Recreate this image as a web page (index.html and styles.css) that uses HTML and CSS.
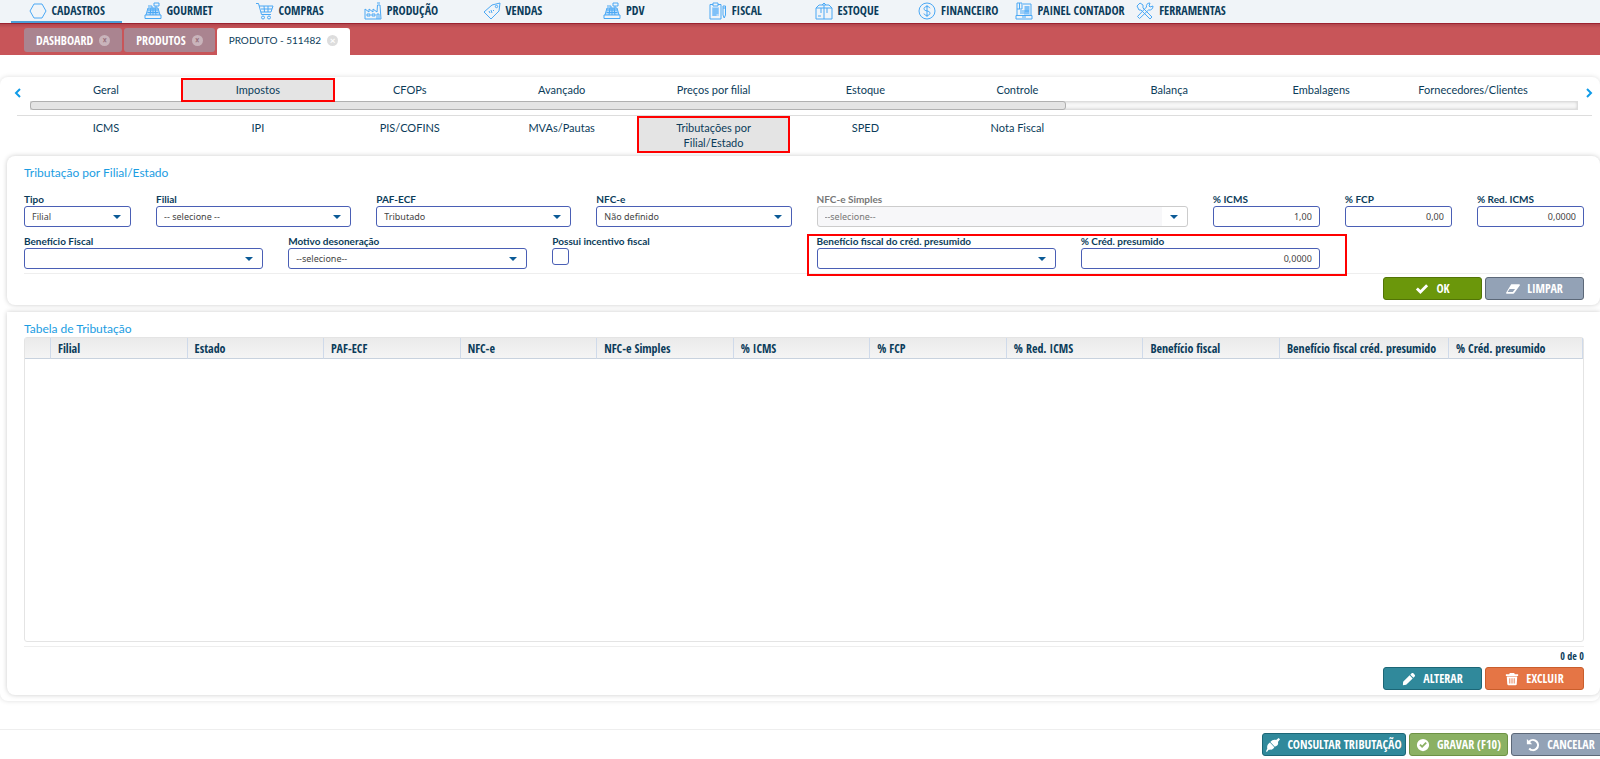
FILE: index.html
```html
<!DOCTYPE html>
<html lang="pt-BR">
<head>
  <meta charset="UTF-8">
  <meta name="viewport" content="width=device-width, initial-scale=1.0">
  <title>Produto - 511482</title>
  <link rel="stylesheet" href="styles.css">
</head>
<body>
  <nav class="topnav">
    <a href="#" class="active"><svg class="icon" viewBox="0 0 18 18"><path d="M5 2h8l4 7-4 7H5L1 9z"/></svg>CADASTROS</a>
    <a href="#"><svg class="icon" viewBox="0 0 18 18"><path class="tint" d="M4 6h10l2 7H2z"/><path d="M1 13h16v3.500H1zM2 13l2-7h10l2 7M10 1h5v3h-5zM12 4v2M4 8h10M3.500 10.500h11M7 6l-1 7M9 6v7M11 6l1 7M4 4h4v2"/></svg>GOURMET</a>
    <a href="#"><svg class="icon" viewBox="0 0 18 18"><path d="M0 1.500h2.500l3 11H15M3 4h14l-2 6H5M5 7h11M8 4l.5 6M12 4v6"/><circle cx="7" cy="15.500" r="1.500"/><circle cx="13" cy="15.500" r="1.500"/></svg>COMPRAS</a>
    <a href="#"><svg class="icon" viewBox="0 0 18 18"><path d="M1 17V7l4 3V7l4 3V7l4 3 .5-7H16l1 14zM13 1h3M3 12h3v2H3zM8 12h3v2H8zM13 17v-5h2v5"/></svg>PRODUÇÃO</a>
    <a href="#"><svg class="icon" viewBox="0 0 18 18"><path d="M1 10l8-7 8-2-1 8-8 8zM6 9l1 2M8 8l1 3M10 8l1 1"/><circle cx="13.500" cy="4.500" r="1.200"/></svg>VENDAS</a>
    <a href="#"><svg class="icon" viewBox="0 0 18 18"><path class="tint" d="M4 6h10l2 7H2z"/><path d="M1 13h16v3.500H1zM2 13l2-7h10l2 7M10 1h5v3h-5zM12 4v2M4 8h10M3.500 10.500h11M7 6l-1 7M9 6v7M11 6l1 7M4 4h4v2"/></svg>PDV</a>
    <a href="#"><svg class="icon" viewBox="0 0 18 18"><path class="tint" d="M3 5h7v9H3z"/><path d="M4 2.500H1V17h11V2.500H9M4 1h5v3H4zM3.500 7h6M3.500 9h6M3.500 11h6M3.500 13h4M14 4h2.500v9L15.200 16 14 13zM14 6h2.500"/></svg>FISCAL</a>
    <a href="#"><svg class="icon" viewBox="0 0 18 18"><path d="M1 6h16v11H1zM1 6l3-3h10l3 3M9 3v14M6 6v5M12 6v5M7 3l2-2 2 2M3 14h3"/></svg>ESTOQUE</a>
    <a href="#"><svg class="icon" viewBox="0 0 18 18"><circle cx="9" cy="9" r="8"/><path d="M12 6.200C11.500 5 10.400 4.600 9 4.600c-1.700 0-3 .8-3 2.100 0 3.100 6 1.400 6 4.500 0 1.400-1.300 2.200-3 2.200-1.500 0-2.700-.6-3.100-1.900M9 3v12"/></svg>FINANCEIRO</a>
    <a href="#"><svg class="icon" viewBox="0 0 18 18"><path class="tint" d="M9 4h6v9H9z"/><path d="M2 13V1h5v6H2M4.500 1v6M8 2h8v11M1 13.500h16V17H1zM10 5h4M10 7h4M10 9h4M5 9h9M5 11h9M7 15h4"/></svg>PAINEL CONTADOR</a>
    <a href="#"><svg class="icon" viewBox="0 0 18 18"><path d="M1 4l3-3 3 2v3l9 9-2 2-9-9H3zM17 4l-3 1-1-1 1-3c-3 0-4 2-3.500 4L1.500 14.500l2 2L12.500 8C15 8.500 17 7 17 4z"/></svg>FERRAMENTAS</a>
  </nav>

  <div class="doc-tabs">
    <a href="#" class="doc-tab">DASHBOARD <span class="close">×</span></a>
    <a href="#" class="doc-tab">PRODUTOS <span class="close">×</span></a>
    <a href="#" class="doc-tab current">PRODUTO - 511482 <span class="close">×</span></a>
  </div>

  <main class="page">
    <div class="tab-scroller">
      <button type="button" class="arrow" aria-label="Anterior"><svg viewBox="0 0 8 10"><path d="M6 1L2 5l4 4"/></svg></button>
      <div class="scroll-area">
        <nav class="tabs">
          <a href="#">Geral</a>
          <a href="#" class="selected">Impostos</a>
          <a href="#">CFOPs</a>
          <a href="#">Avançado</a>
          <a href="#">Preços por filial</a>
          <a href="#">Estoque</a>
          <a href="#">Controle</a>
          <a href="#">Balança</a>
          <a href="#">Embalagens</a>
          <a href="#">Fornecedores/Clientes</a>
        </nav>
        <div class="scrollbar"><div class="thumb"></div></div>
      </div>
      <button type="button" class="arrow" aria-label="Próximo"><svg viewBox="0 0 8 10"><path d="M2 1l4 4-4 4"/></svg></button>
    </div>

    <nav class="tabs subtabs">
      <a href="#">ICMS</a>
      <a href="#">IPI</a>
      <a href="#">PIS/COFINS</a>
      <a href="#">MVAs/Pautas</a>
      <a href="#" class="selected">Tributações por Filial/Estado</a>
      <a href="#">SPED</a>
      <a href="#">Nota Fiscal</a>
    </nav>

    <section class="panel">
      <h2>Tributação por Filial/Estado</h2>
      <form class="fields">
        <div class="field w3">
          <label for="tipo">Tipo</label>
          <select id="tipo"><option>Filial</option></select>
        </div>
        <div class="field w5">
          <label for="filial">Filial</label>
          <select id="filial"><option>-- selecione --</option></select>
        </div>
        <div class="field w5">
          <label for="paf">PAF-ECF</label>
          <select id="paf"><option>Tributado</option></select>
        </div>
        <div class="field w5">
          <label for="nfce">NFC-e</label>
          <select id="nfce"><option>Não definido</option></select>
        </div>
        <div class="field w9 disabled">
          <label for="nfce-simples">NFC-e Simples</label>
          <select id="nfce-simples" disabled><option>--selecione--</option></select>
        </div>
        <div class="field w3">
          <label for="icms">% ICMS</label>
          <input type="text" id="icms" value="1,00">
        </div>
        <div class="field w3">
          <label for="fcp">% FCP</label>
          <input type="text" id="fcp" value="0,00">
        </div>
        <div class="field w3">
          <label for="red-icms">% Red. ICMS</label>
          <input type="text" id="red-icms" value="0,0000">
        </div>

        <div class="field w6">
          <label for="beneficio">Benefício Fiscal</label>
          <select id="beneficio"><option></option></select>
        </div>
        <div class="field w6">
          <label for="motivo">Motivo desoneração</label>
          <select id="motivo"><option>--selecione--</option></select>
        </div>
        <div class="field w6">
          <label for="incentivo">Possui incentivo fiscal</label>
          <input type="checkbox" id="incentivo">
        </div>
        <div class="presumido">
          <div class="field">
            <label for="beneficio-cred">Benefício fiscal do créd. presumido</label>
            <select id="beneficio-cred"><option></option></select>
          </div>
          <div class="field">
            <label for="cred">% Créd. presumido</label>
            <input type="text" id="cred" value="0,0000">
          </div>
        </div>
      </form>
      <div class="actions">
        <button type="button" class="btn green"><svg viewBox="0 0 16 16"><path d="M1 8.500l2.300-2.300L6.200 9l6.500-6.500L15 4.800 6.200 13.600z"/></svg>OK</button>
        <button type="button" class="btn gray"><svg viewBox="0 0 18 16"><path fill-rule="evenodd" d="M7.500 2H17c.8 0 1.200.7.700 1.400l-7 9.800c-.3.500-.8.800-1.400.8H1c-.8 0-1.200-.8-.7-1.400l6-10c.3-.4.700-.6 1.200-.6zM4.600 8L2 12h6.800l2.800-4z"/></svg>LIMPAR</button>
      </div>
    </section>

    <section class="panel grow">
      <h2>Tabela de Tributação</h2>
      <div class="table-box">
        <table>
          <thead>
            <tr>
              <th class="mark"></th>
              <th>Filial</th>
              <th>Estado</th>
              <th>PAF-ECF</th>
              <th>NFC-e</th>
              <th>NFC-e Simples</th>
              <th>% ICMS</th>
              <th>% FCP</th>
              <th>% Red. ICMS</th>
              <th>Benefício fiscal</th>
              <th class="wide">Benefício fiscal créd. presumido</th>
              <th class="last">% Créd. presumido</th>
            </tr>
          </thead>
        </table>
      </div>
      <p class="count">0 de 0</p>
      <div class="actions">
        <button type="button" class="btn teal"><svg viewBox="0 0 16 16"><path d="M11 1.500c.6-.6 1.400-.6 2 0L14.500 3c.6.600.6 1.400 0 2L13 6.500 9.500 3zM8.700 3.800l3.500 3.500-7.400 7.400L1 15l.3-3.800z"/></svg>ALTERAR</button>
        <button type="button" class="btn orange"><svg viewBox="0 0 16 16"><path fill-rule="evenodd" d="M5.500 1h5l.7 1.500H15v2H1v-2h3.800zM2 5h12l-.6 9c0 .6-.6 1-1.200 1H3.800c-.6 0-1.200-.4-1.200-1zm3 2v6h1V7zm2.500 0v6h1V7zM10 7v6h1V7z"/></svg>EXCLUIR</button>
      </div>
    </section>
  </main>

  <footer class="bottom-bar">
    <button type="button" class="btn teal long"><svg viewBox="0 0 16 16"><path d="M0 15l1.500-3C.8 9 2 6.500 4.500 5l5 5.500c-1.500 2.500-4 3.500-6.500 2.800L1 16zM5 4.500C7 2.200 9 1.600 11.500 2.300L14.500 0 16 1.500l-2.300 3c.6 2.300 0 4.300-3.700 5.500z"/></svg>CONSULTAR TRIBUTAÇÃO</button>
    <button type="button" class="btn lime"><svg viewBox="0 0 16 16"><path fill-rule="evenodd" d="M8 1a7 7 0 110 14A7 7 0 018 1zM3.800 8.300L7 11.500l5.400-5.400-1.500-1.500L7 8.500 5.300 6.800z"/></svg>GRAVAR (F10)</button>
    <button type="button" class="btn gray"><svg viewBox="0 0 16 16"><path d="M1 1l2 2a7 7 0 11-.2 9.800l1.700-1.600A4.600 4.600 0 104.700 4.700L7 7H1z"/></svg>CANCELAR</button>
  </footer>
</body>
</html>
```
FILE: styles.css
```css
* {
  margin: 0;
  padding: 0;
  box-sizing: border-box;
}

body {
  display: flex;
  flex-direction: column;
  min-height: 100vh;
  overflow: hidden;
  background: #fff;
  color: #0b3c5a;
  font-family: Lato, sans-serif;
  font-size: 11px;
}

a {
  color: inherit;
  text-decoration: none;
}

/* Main menu */
.topnav {
  display: grid;
  grid-template-columns: repeat(11, 100fr) 326fr;
  height: 23px;
  padding-left: 11px;
  background: #f0f4f8;
  font-family: "Open Sans Condensed", Lato, sans-serif;
}

.topnav a {
  display: flex;
  align-items: center;
  justify-content: center;
  gap: 5px;
  font-size: 12px;
  white-space: nowrap;
  border-bottom: 2px solid transparent;
}

.topnav a.active {
  border-bottom-color: #4a9fd8;
}

.icon {
  flex: none;
  width: 18px;
  height: 18px;
  fill: none;
  stroke: #4aa8f5;
  stroke-width: 1;
}

.tint {
  fill: #b5dafb;
  stroke: none;
}

/* Open documents */
.doc-tabs {
  display: flex;
  gap: 2px;
  height: 32px;
  padding: 4px 24px 0;
  background: linear-gradient(#b0454c, #c85559 4px);
  border-top: 1px solid #9c2230;
}

.doc-tab {
  display: flex;
  align-items: center;
  gap: 6px;
  height: 24px;
  padding: 0 12px;
  border-radius: 3px;
  background: #aa8490;
  color: #fff;
  font-family: "Open Sans Condensed", Lato, sans-serif;
  font-size: 12px;
  font-weight: bold;
}

.doc-tab.current {
  height: 27px;
  padding: 0 12px 3px;
  border-radius: 3px 3px 0 0;
  background: #fff;
  color: #0b3c5a;
  font-family: Lato, sans-serif;
  font-size: 10px;
  font-weight: normal;
}

.close {
  width: 11px;
  height: 11px;
  border-radius: 50%;
  background: #c9b4bb;
  color: #98707c;
  font-size: 10px;
  font-weight: bold;
  line-height: 11px;
  text-align: center;
}

.current .close {
  background: #ddd;
  color: #fff;
}

/* Page card */
.page {
  flex: 1;
  display: flex;
  flex-direction: column;
  margin-top: 22px;
  padding-bottom: 6px;
  border-radius: 8px;
  box-shadow: 0 0 5px #ddd;
}

.tab-scroller {
  display: flex;
}

.scroll-area {
  flex: 1;
}

.arrow {
  width: 22px;
  border: none;
  background: none;
}

.arrow:first-child {
  width: 30px;
  padding-left: 6px;
}

.arrow svg {
  width: 8px;
  height: 10px;
  fill: none;
  stroke: #0f9be8;
  stroke-width: 2;
}

.tabs {
  display: grid;
  grid-template-columns: repeat(10, 1fr);
  padding: 2px 29px 0 0;
  line-height: 15px;
  text-align: center;
}

.tabs a {
  padding: 3px 10px 4px;
}

.tabs .selected {
  background: #e4e4e4;
  outline: 2px solid #f00;
  outline-offset: -1px;
  z-index: 1;
}

.scrollbar {
  height: 9px;
  border: 1px solid #ddd;
  background: #f7f7f7;
  box-shadow: inset 0 0 3px #ccc;
}

.thumb {
  width: 67%;
  height: 9px;
  margin: -1px;
  border: 1px solid #b0b0b0;
  border-radius: 3px;
  background: #e4e4e4;
}

.subtabs {
  margin: 5px 8px 0 17px;
  padding: 1px 43px 0 13px;
  border-top: 1px solid #ddd;
}

.subtabs a {
  padding: 3px 30px 2px;
}

.panel {
  display: flex;
  flex-direction: column;
  margin: 4px 0 0 7px;
  padding: 9px 16px 5px 17px;
  border-radius: 8px;
  background: #fff;
  box-shadow: 0 0 5px #ccc;
}

.panel + .panel {
  margin-top: 7px;
  border-radius: 0 0 8px 8px;
}

.grow {
  flex: 1;
}

h2 {
  color: #1b9de2;
  font-size: 12px;
  font-weight: normal;
  line-height: 16px;
}

/* Form */
.fields {
  display: grid;
  grid-template-columns: repeat(36, 1fr);
  gap: 7px 25px;
  padding: 11px 0 4px;
  border-bottom: 1px solid #eee;
}

.field {
  display: flex;
  flex-direction: column;
}

.w3 { grid-column: span 3; }
.w5 { grid-column: span 5; }
.w6 { grid-column: span 6; }
.w9 { grid-column: span 9; }

.presumido {
  grid-column: span 12;
  position: relative;
  display: grid;
  grid-template-columns: 1fr 1fr;
  gap: 25px;
}

.presumido::before {
  content: "";
  position: absolute;
  inset: 0 -27px -7px -10px;
  border: 2px solid #f00;
  pointer-events: none;
}

label {
  font-size: 10px;
  font-weight: bold;
  line-height: 14px;
}

.disabled label {
  color: #777;
}

select,
input[type="text"] {
  width: 100%;
  height: 21px;
  padding: 0 7px;
  border: 1px solid #4a5fb5;
  border-radius: 3px;
  background: #fff;
  color: #444;
  font-family: "Noto Sans", sans-serif;
  font-size: 9px;
}

input[type="text"] {
  text-align: right;
}

select {
  appearance: none;
  background: #fff url("data:image/svg+xml,%3Csvg xmlns='http://www.w3.org/2000/svg' width='8' height='4'%3E%3Cpath fill='%230b5a96' d='M0 0h8L4 4z'/%3E%3C/svg%3E") no-repeat right 9px center;
}

select:disabled {
  border-color: #ccc;
  opacity: 1;
  background-color: #f7f7f9;
  background-image: url("data:image/svg+xml,%3Csvg xmlns='http://www.w3.org/2000/svg' width='8' height='4'%3E%3Cpath fill='%230b5a96' d='M0 0h8L4 4z'/%3E%3C/svg%3E"), linear-gradient(#fff, #fff);
  background-position: right 9px center, right center;
  background-size: 8px 4px, 25px 100%;
  color: #777;
}

input[type="checkbox"] {
  appearance: none;
  width: 17px;
  height: 17px;
  border: 1px solid #4a5fb5;
  border-radius: 3px;
  background: #fff;
}

/* Buttons */
.actions {
  display: flex;
  justify-content: flex-end;
  gap: 3px;
  padding-top: 3px;
}

.btn {
  display: flex;
  align-items: center;
  justify-content: center;
  gap: 7px;
  width: 99px;
  height: 23px;
  border: 1px solid;
  border-radius: 3px;
  color: #fff;
  font-family: "Open Sans Condensed", Lato, sans-serif;
  font-size: 12px;
  font-weight: bold;
  white-space: nowrap;
}

.btn svg {
  width: 14px;
  height: 14px;
  fill: #fff;
}

.green { background: #6b970b; border-color: #527406; }
.gray { background: #93a2b6; border-color: #5c6878; }
.teal { background: #30899b; border-color: #1c6676; }
.orange { background: #e57545; border-color: #c95e2c; }
.lime { background: #8bb163; border-color: #6d9245; }

/* Table */
.table-box {
  flex: 1;
  border: 1px solid #e4e4e4;
  border-radius: 3px;
}

table {
  width: 100%;
  table-layout: fixed;
  border-spacing: 0;
}

th {
  height: 21px;
  padding-left: 7px;
  border-right: 1px solid #cfdaea;
  border-bottom: 1px solid #c8d2de;
  background: linear-gradient(#eaeaea, #f4f4f4);
  font-family: "Open Sans Condensed", Lato, sans-serif;
  font-size: 12px;
  text-align: left;
  white-space: nowrap;
}

.mark { width: 26px; }
.wide { width: 169px; }
.last { width: 134px; }

.count {
  margin-top: 4px;
  padding-top: 2px;
  border-top: 1px solid #eee;
  font-family: "Open Sans Condensed", Lato, sans-serif;
  font-size: 10px;
  font-weight: bold;
  line-height: 15px;
  text-align: right;
}

.bottom-bar {
  display: flex;
  justify-content: flex-end;
  gap: 3px;
  margin: 28px -10px 0 0;
  padding: 3px 0;
  border-top: 1px solid #eee;
}

.long {
  width: 144px;
}
```
